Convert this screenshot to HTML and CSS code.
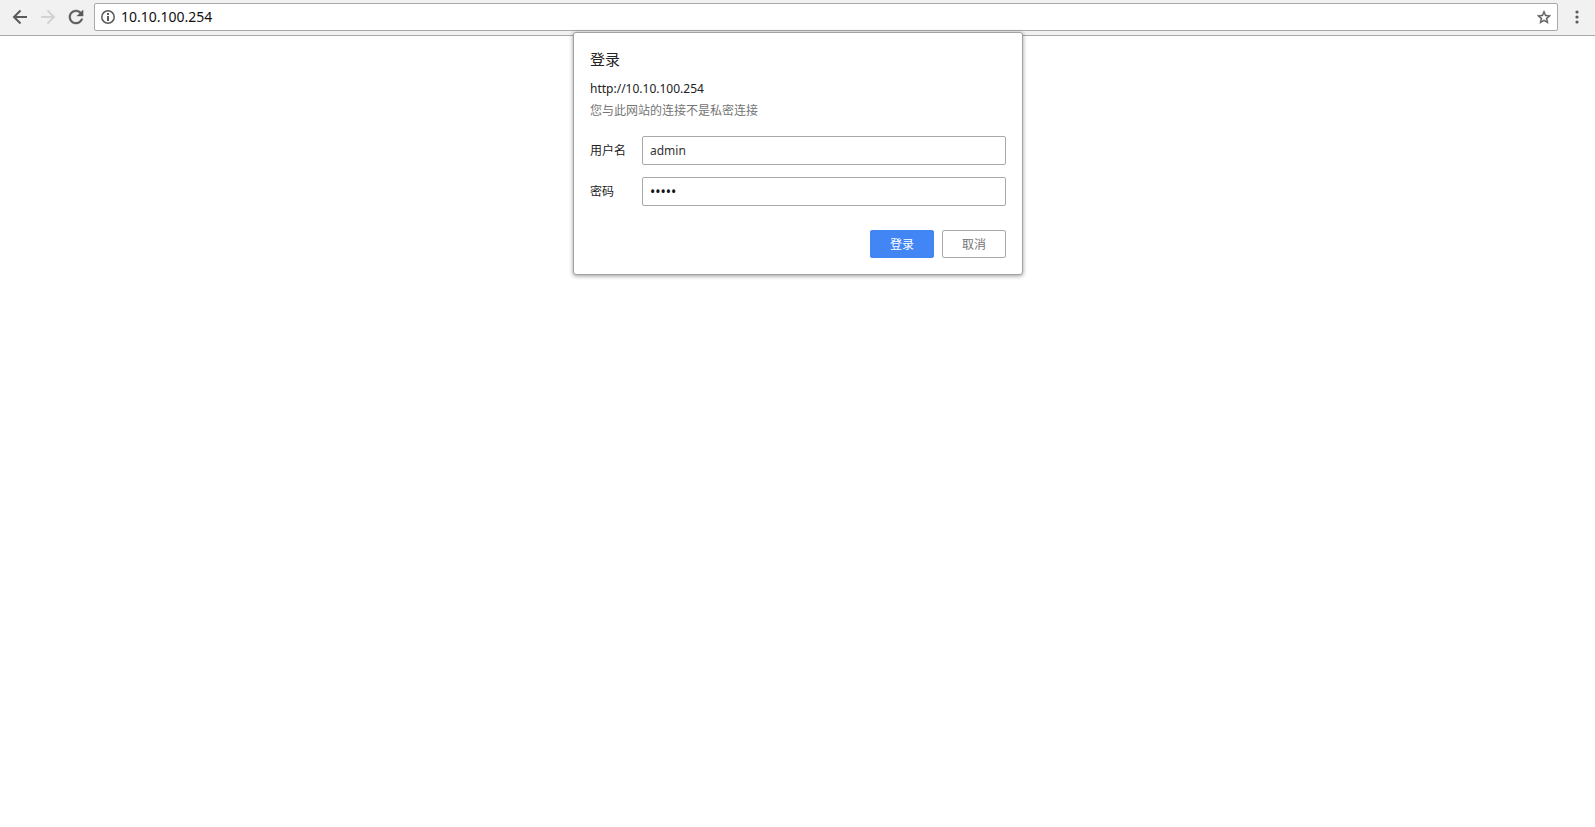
FILE: index.html
```html
<!DOCTYPE html>
<html lang="zh-CN">
<head>
<meta charset="utf-8">
<title>10.10.100.254</title>
<link rel="stylesheet" href="styles.css">
</head>
<body>

<header class="toolbar">
  <button type="button" class="icon-btn" aria-label="后退">
    <svg width="16" height="16" viewBox="0 0 16 16"><path d="M15 8H2.5M8.5 1.5L2 8l6.500 6.500" fill="none" stroke="#5a5a5a" stroke-width="2"/></svg>
  </button>
  <button type="button" class="icon-btn" aria-label="前进" disabled>
    <svg width="16" height="16" viewBox="0 0 16 16"><path d="M1 8h12.500M7.500 1.500L14 8l-6.500 6.500" fill="none" stroke="#d3d3d3" stroke-width="2"/></svg>
  </button>
  <button type="button" class="icon-btn" aria-label="重新加载">
    <svg width="16" height="16" viewBox="3 3 18 18"><path d="M17.650 6.350C16.200 4.900 14.210 4 12 4c-4.420 0-7.990 3.580-7.990 8s3.570 8 7.990 8c3.730 0 6.840-2.550 7.730-6h-2.080c-.82 2.330-3.040 4-5.650 4-3.310 0-6-2.690-6-6s2.690-6 6-6c1.660 0 3.140.69 4.220 1.780L13 11h7V4l-2.350 2.350z" fill="#5a5a5a" stroke="#5a5a5a" stroke-width=".4"/></svg>
  </button>
  <div class="omnibox">
    <svg width="14" height="14" viewBox="0 0 14 14"><circle cx="7" cy="7" r="6.200" fill="none" stroke="#5a5a5a" stroke-width="1.500"/><path d="M6 3h2v2H6zM6 6h2v5H6z" fill="#5a5a5a"/></svg>
    <input class="address" type="text" value="10.10.100.254" aria-label="地址">
    <button type="button" class="star" aria-label="收藏">
      <svg width="16" height="16" viewBox="0.5 0 23 23"><path d="M22 9.240l-7.190-.62L12 2 9.190 8.630 2 9.240l5.460 4.730L5.820 21 12 17.270 18.180 21l-1.630-7.030L22 9.240zM12 15.400l-3.760 2.270 1-4.280-3.320-2.880 4.380-.38L12 6.100l1.710 4.040 4.380.38-3.320 2.880 1 4.280L12 15.400z" fill="#5a5a5a" stroke="#5a5a5a" stroke-width=".5"/></svg>
    </button>
  </div>
  <button type="button" class="menu-btn" aria-label="菜单">
    <svg width="4" height="14" viewBox="0 0 4 14"><g fill="#5a5a5a"><circle cx="2" cy="2" r="1.600"/><circle cx="2" cy="7" r="1.600"/><circle cx="2" cy="12" r="1.600"/></g></svg>
  </button>
</header>

<div class="overlay">
  <form class="dialog" role="dialog" aria-labelledby="dialog-title">
    <h1 class="title" id="dialog-title">登录</h1>
    <p class="origin">http://10.10.100.254</p>
    <p class="notice">您与此网站的连接不是私密连接</p>
    <div class="fields">
      <label for="username">用户名</label>
      <input class="field" id="username" type="text" value="admin">
      <label for="password">密码</label>
      <input class="field password" id="password" type="password" value="admin">
    </div>
    <div class="actions">
      <button type="button" class="btn primary">登录</button>
      <button type="button" class="btn">取消</button>
    </div>
  </form>
</div>

</body>
</html>
```
FILE: styles.css
```css
* {
  box-sizing: border-box;
}

body {
  margin: 0;
  background: #fff;
  color: #222;
  font: 12px/20px "Noto Sans", "Noto Sans CJK SC", sans-serif;
}

button, input {
  font: inherit;
  margin: 0;
}

svg {
  display: block;
}

.toolbar {
  display: flex;
  align-items: center;
  height: 36px;
  padding: 0 12px 2px;
  background: #f1f1f1;
  border-bottom: 1px solid #a9a9a9;
}

.icon-btn, .star, .menu-btn {
  padding: 0;
  border: 0;
  background: none;
}

.icon-btn {
  margin-right: 12px;
}

.omnibox {
  display: flex;
  flex: 1;
  align-items: center;
  height: 28px;
  margin-left: -2px;
  padding: 0 5px 0 6px;
  background: #fff;
  border: 1px solid #a9a9a9;
  border-radius: 2px;
}

.address {
  flex: 1;
  padding: 0 6px;
  border: 0;
  outline: 0;
  color: #111;
  font-size: 14px;
}

.menu-btn {
  padding: 0 4px 0 17px;
}

/* the dialog hangs over the bottom edge of the toolbar */
.overlay {
  position: absolute;
  top: 32px;
  left: 0;
  right: 0;
  display: flex;
  justify-content: center;
  padding-left: 1px;
}

.dialog {
  width: 450px;
  padding: 16px;
  background: #fff;
  border: 1px solid #a3a3a3;
  border-radius: 3px;
  box-shadow: 0 1px 4px rgba(0, 0, 0, 0.4);
}

.title {
  margin: 0 0 10px;
  font-size: 15px;
  font-weight: normal;
}

.origin, .notice {
  margin: 0;
}

.notice {
  margin-top: 2px;
  color: #757575;
}

.fields {
  display: grid;
  grid-template-columns: 36px 1fr;
  gap: 12px 16px;
  align-items: center;
  margin-top: 15px;
}

.field {
  width: 100%;
  height: 29px;
  padding: 0 7px;
  border: 1px solid #a9a9a9;
  border-radius: 2px;
  background: #fff;
  color: #333;
  outline: 0;
}

.password {
  color: #111;
  font-size: 14px;
}

.actions {
  display: flex;
  justify-content: flex-end;
  gap: 8px;
  margin-top: 24px;
}

.btn {
  width: 64px;
  height: 28px;
  padding: 2px 0 0;
  border: 1px solid #a9a9a9;
  border-radius: 2px;
  background: #fff;
  color: #757575;
}

.primary {
  border-color: #4285f4;
  background: #4285f4;
  color: #fff;
}
```
